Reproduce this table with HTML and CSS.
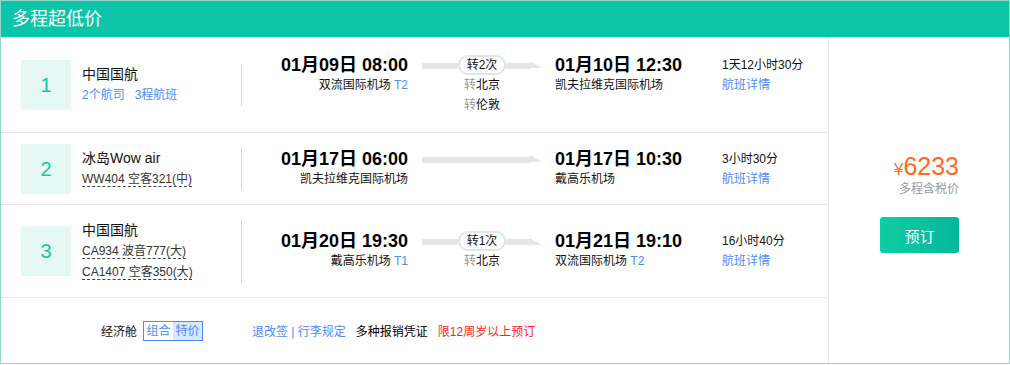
FILE: index.html
```html
<!DOCTYPE html>
<html lang="zh-CN">
<head>
<meta charset="utf-8">
<title>多程超低价</title>
<link rel="stylesheet" href="styles.css">
</head>
<body>
<div class="card">
  <div class="head">多程超低价</div>
  <div class="body">
    <div class="left">
      <div class="row row-1">
        <div class="num">1</div>
        <div class="airline">
          <div class="name">中国国航</div>
          <div class="blue">2个航司<span class="gap"></span>3程航班</div>
        </div>
        <div class="trip">
          <div class="dep">
            <div class="time">01月09日 08:00</div>
            <div class="port">双流国际机场 <span class="blue">T2</span></div>
          </div>
          <div class="route">
            <div class="line">
              <span class="bar bar-lead"></span>
              <span class="pill">转2次</span>
              <span class="bar bar-fill"></span>
              <svg class="tip" width="12" height="8" viewBox="0 0 12 8"><polygon points="0,0 12,7 0,7" fill="#e6e6e6"/></svg>
            </div>
            <div class="via"><span class="grey">转</span>北京</div>
            <div class="via"><span class="grey">转</span>伦敦</div>
          </div>
          <div class="arr">
            <div class="time">01月10日 12:30</div>
            <div class="port">凯夫拉维克国际机场</div>
          </div>
          <div class="dur">
            <div>1天12小时30分</div>
            <div class="blue">航班详情</div>
          </div>
        </div>
      </div>

      <div class="row row-2">
        <div class="num">2</div>
        <div class="airline">
          <div class="name">冰岛Wow air</div>
          <div><span class="code">WW404 空客321(中)</span></div>
        </div>
        <div class="trip">
          <div class="dep">
            <div class="time">01月17日 06:00</div>
            <div class="port">凯夫拉维克国际机场</div>
          </div>
          <div class="route">
            <div class="line">
              <span class="bar bar-fill"></span>
              <svg class="tip" width="12" height="8" viewBox="0 0 12 8"><polygon points="0,0 12,7 0,7" fill="#e6e6e6"/></svg>
            </div>
          </div>
          <div class="arr">
            <div class="time">01月17日 10:30</div>
            <div class="port">戴高乐机场</div>
          </div>
          <div class="dur">
            <div>3小时30分</div>
            <div class="blue">航班详情</div>
          </div>
        </div>
      </div>

      <div class="row row-3">
        <div class="num">3</div>
        <div class="airline">
          <div class="name">中国国航</div>
          <div><span class="code">CA934 波音777(大)</span></div>
          <div><span class="code">CA1407 空客350(大)</span></div>
        </div>
        <div class="trip">
          <div class="dep">
            <div class="time">01月20日 19:30</div>
            <div class="port">戴高乐机场 <span class="blue">T1</span></div>
          </div>
          <div class="route">
            <div class="line">
              <span class="bar bar-lead"></span>
              <span class="pill">转1次</span>
              <span class="bar bar-fill"></span>
              <svg class="tip" width="12" height="8" viewBox="0 0 12 8"><polygon points="0,0 12,7 0,7" fill="#e6e6e6"/></svg>
            </div>
            <div class="via"><span class="grey">转</span>北京</div>
          </div>
          <div class="arr">
            <div class="time">01月21日 19:10</div>
            <div class="port">双流国际机场 <span class="blue">T2</span></div>
          </div>
          <div class="dur">
            <div>16小时40分</div>
            <div class="blue">航班详情</div>
          </div>
        </div>
      </div>

      <div class="foot">
        <span>经济舱</span>
        <span class="cabin"><span class="cabin-a">组合</span><span class="cabin-b">特价</span></span>
        <span class="rules blue">退改签 | 行李规定</span>
        <span class="receipt">多种报销凭证</span>
        <span class="limit">限12周岁以上预订</span>
      </div>
    </div>

    <div class="right">
      <div class="price"><span class="yen">¥</span><span class="amount">6233</span></div>
      <div class="price-label">多程含税价</div>
      <button class="book">预订</button>
    </div>
  </div>
</div>
</body>
</html>
```

FILE: styles.css
```css
* {
  box-sizing: border-box;
}

html, body {
  margin: 0;
  padding: 0;
  background: #ffffff;
}

body {
  font-family: "Liberation Sans", "Noto Sans CJK SC", sans-serif;
  font-size: 12px;
  color: #111111;
}

.card {
  width: 1010px;
  height: 364px;
  border: 1px solid #8ed9c7;
  display: flex;
  flex-direction: column;
}

.head {
  height: 36px;
  line-height: 36px;
  background: #0cc5a8;
  color: #ffffff;
  font-size: 18px;
  padding-left: 11px;
}

.body {
  flex: 1;
  display: flex;
}

.left {
  width: 828px;
  border-right: 1px solid #e6e6e6;
  display: flex;
  flex-direction: column;
}

.row {
  display: flex;
  align-items: center;
  padding-left: 20px;
  border-bottom: 1px solid #e6e6e6;
}

.row-1 { height: 96px; }
.row-2 { height: 72px; }
.row-3 { height: 93px; }

.num {
  width: 50px;
  height: 50px;
  background: #e6f8f3;
  color: #19c4a1;
  font-size: 20px;
  line-height: 50px;
  text-align: center;
}

.airline {
  width: 160px;
  margin-left: 11px;
  border-right: 1px solid #d6d6d6;
  line-height: 21px;
}

.airline .name {
  font-size: 14px;
  color: #111111;
}

.gap {
  display: inline-block;
  width: 10px;
}

.code {
  color: #333333;
  text-decoration: underline dashed #444444;
  text-underline-offset: 3px;
}

.blue {
  color: #4b8df8;
}

.grey {
  color: #999999;
}

.trip {
  display: flex;
  align-items: flex-start;
}

.time {
  font-size: 18px;
  font-weight: bold;
  line-height: 20px;
  color: #000000;
}

.port {
  line-height: 20px;
  color: #111111;
}

.dep {
  width: 166px;
  text-align: right;
}

.route {
  width: 147px;
  padding: 0 13px 0 14px;
  text-align: center;
}

.line {
  display: flex;
  align-items: center;
  height: 20px;
}

.bar {
  height: 6px;
  background: #e6e6e6;
  margin-top: 2px;
}

.bar-lead {
  width: 36px;
}

.bar-fill {
  flex: 1;
}

.tip {
  display: block;
  flex: none;
  margin-top: 1px;
}

.pill {
  width: 48px;
  height: 20px;
  border: 2px solid #e4e4e4;
  border-radius: 10px;
  background: #ffffff;
  line-height: 16px;
  text-align: center;
  color: #111111;
}

.via {
  line-height: 20px;
}

.arr {
  width: 167px;
}

.dur {
  line-height: 20px;
}

.foot {
  flex: 1;
  display: flex;
  align-items: center;
  padding-left: 100px;
}

.cabin {
  display: flex;
  margin-left: 6px;
  border: 1px solid #4b8df8;
  height: 20px;
  line-height: 18px;
}

.cabin-a,
.cabin-b {
  width: 29px;
  text-align: center;
  color: #4b8df8;
}

.cabin-b {
  background: #d7e7fd;
}

.rules {
  margin-left: 49px;
}

.receipt {
  margin-left: 10px;
  color: #000000;
}

.limit {
  margin-left: 10px;
  color: #ff1f1f;
}

.right {
  flex: 1;
  display: flex;
  flex-direction: column;
  justify-content: center;
  align-items: flex-end;
  padding-right: 50px;
  padding-top: 4px;
}

.price {
  display: flex;
  align-items: baseline;
  height: 30px;
  line-height: 30px;
  color: #ff6a1f;
}

.yen {
  font-size: 17px;
}

.amount {
  font-size: 25px;
}

.price-label {
  color: #999999;
  line-height: 16px;
}

.book {
  margin-top: 20px;
  width: 79px;
  height: 36px;
  border: none;
  border-radius: 3px;
  background: linear-gradient(90deg, #0fcca3, #06b89b);
  color: #ffffff;
  font-family: "Liberation Sans", "Noto Sans CJK SC", sans-serif;
  font-size: 15px;
  padding: 0;
}
```
